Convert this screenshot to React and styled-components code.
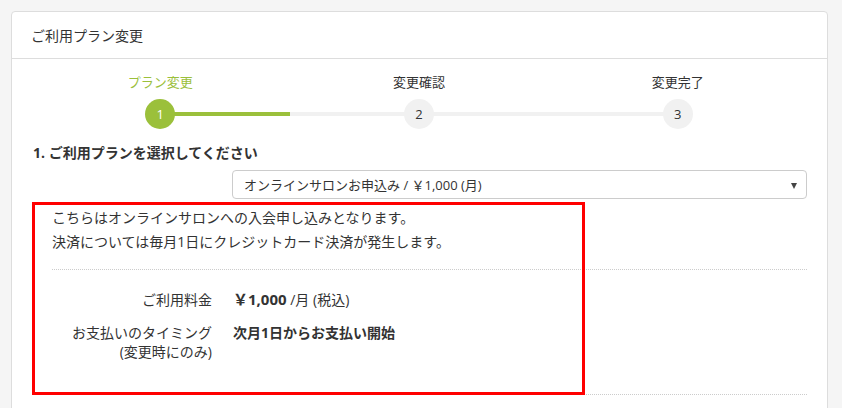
import React from "react";
import styled, { createGlobalStyle } from "styled-components";

const GlobalStyle = createGlobalStyle`
  body {
    margin: 0;
    background: #f5f5f5;
    font-family: "Open Sans", "Noto Sans CJK JP", sans-serif;
    color: #333;
  }
`;

const Page = styled.div`
  box-sizing: border-box;
  height: 408px;
  overflow: hidden;
  padding: 11px 14px 0 11px;
`;

const Card = styled.section`
  background: #fff;
  border: 1px solid #ddd;
  border-radius: 4px;
  height: 420px;
`;

const CardHeader = styled.header`
  height: 46px;
  display: flex;
  align-items: center;
  padding: 0 19px;
  border-bottom: 1px solid #ddd;
  font-size: 14px;
`;

const CardBody = styled.div`
  padding: 13px 20px 0 19px;
`;

const Steps = styled.ol`
  display: grid;
  grid-template-columns: repeat(3, 1fr);
  list-style: none;
  margin: 0;
  padding: 0;
`;

const Step = styled.li`
  display: flex;
  flex-direction: column;
  align-items: center;
  gap: 7px;
  position: relative;
  font-size: 13px;
  line-height: 20px;
  color: ${({ $active }) => ($active ? "#9bc03b" : "#333")};

  &::before,
  &::after {
    content: "";
    position: absolute;
    top: 40px;
    height: 4px;
  }
  &::before {
    left: 0;
    right: 50%;
    background: ${({ $first }) => ($first ? "transparent" : "#f1f1f1")};
  }
  &::after {
    left: 50%;
    right: 0;
    background: ${({ $last, $done }) =>
      $last ? "transparent" : $done ? "#9bc03b" : "#f1f1f1"};
  }
`;

const StepCircle = styled.span`
  position: relative;
  z-index: 1;
  width: 30px;
  height: 30px;
  border-radius: 50%;
  display: flex;
  align-items: center;
  justify-content: center;
  font-size: 13px;
  background: ${({ $active }) => ($active ? "#9bc03b" : "#f1f1f1")};
  color: ${({ $active }) => ($active ? "#fff" : "#333")};
`;

const SectionTitle = styled.h3`
  margin: 14px 0 0 2px;
  font-size: 14px;
  font-weight: bold;
  line-height: 20px;
`;

const SelectBox = styled.div`
  position: relative;
  margin: 7px 0 0 201px;
  height: 27px;
  border: 1px solid #ccc;
  border-radius: 4px;
  display: flex;
  align-items: center;
  padding-left: 11px;
  font-size: 13px;

  &::after {
    content: "";
    position: absolute;
    right: 9px;
    top: 12px;
    border-left: 3px solid transparent;
    border-right: 3px solid transparent;
    border-top: 6px solid #444;
  }
`;

const Info = styled.div`
  position: relative;
  padding: 7px 0 0 21px;
`;

const Frame = styled.div`
  position: absolute;
  left: 1px;
  top: 3px;
  width: 547px;
  height: 187px;
  border: 3px solid #f00;
  pointer-events: none;
`;

const Note = styled.p`
  margin: 0;
  font-size: 14px;
  line-height: 24px;
  padding-bottom: 15px;
  border-bottom: 1px dotted #ccc;
`;

const Details = styled.dl`
  display: grid;
  grid-template-columns: 160px 1fr;
  column-gap: 21px;
  row-gap: 14px;
  margin: 0;
  padding: 20px 0 33px;
  border-bottom: 1px dotted #ccc;
  font-size: 14px;
  line-height: 19px;
`;

const Term = styled.dt`
  text-align: right;
`;

const Desc = styled.dd`
  margin: 0;
  font-weight: ${({ $bold }) => ($bold ? "bold" : "normal")};
`;

const Price = styled.strong`
  font-size: 15px;
`;

const steps = ["プラン変更", "変更確認", "変更完了"];

export default function App() {
  return (
    <Page>
      <GlobalStyle />
      <Card>
        <CardHeader>ご利用プラン変更</CardHeader>
        <CardBody>
          <Steps>
            {steps.map((label, i) => (
              <Step
                key={label}
                $active={i === 0}
                $done={i === 0}
                $first={i === 0}
                $last={i === steps.length - 1}
              >
                {label}
                <StepCircle $active={i === 0}>{i + 1}</StepCircle>
              </Step>
            ))}
          </Steps>
          <SectionTitle>1. ご利用プランを選択してください</SectionTitle>
          <SelectBox>オンラインサロンお申込み / ￥1,000 (月)</SelectBox>
          <Info>
            <Note>
              こちらはオンラインサロンへの入会申し込みとなります。
              <br />
              決済については毎月1日にクレジットカード決済が発生します。
            </Note>
            <Details>
              <Term>ご利用料金</Term>
              <Desc>
                <Price>￥1,000</Price> /月 (税込)
              </Desc>
              <Term>
                お支払いのタイミング
                <br />
                (変更時にのみ)
              </Term>
              <Desc $bold>次月1日からお支払い開始</Desc>
            </Details>
            <Frame />
          </Info>
        </CardBody>
      </Card>
    </Page>
  );
}
